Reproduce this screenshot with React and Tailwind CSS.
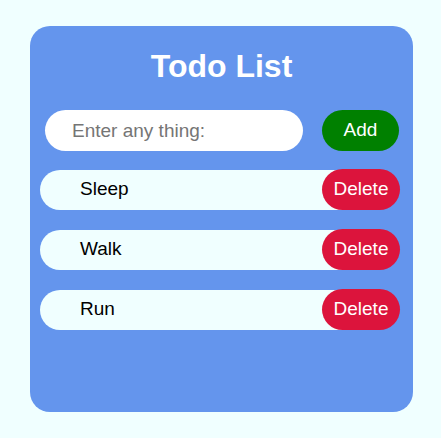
export default function App() {
  const items = ["Sleep", "Walk", "Run"];
  return (
    <div className="w-[441px] h-[438px] bg-[#f0ffff] pt-[26px] pl-[30px]" style={{ fontFamily: '"Liberation Sans", Arial, sans-serif' }}>
      <div className="w-[383px] h-[386px] bg-[#6495ed] rounded-[20px] flex flex-col">
        <h1 className="text-[32px] font-bold text-white text-center leading-[37px] mt-[22px]">Todo List</h1>
        <div className="flex items-center mt-[25px] pl-[15px]">
          <input
            className="w-[258px] h-[41px] rounded-full bg-white pl-[27px] text-[19px] text-black placeholder:text-[#757575] outline-none"
            placeholder="Enter any thing:"
          />
          <button className="ml-[19px] w-[77px] h-[41px] rounded-full bg-[#008000] text-white text-[19px]">Add</button>
        </div>
        <div className="flex flex-col gap-[19px] mt-[18px] pl-[10px]">
          {items.map((t) => (
            <div key={t} className="w-[360px] h-[41px] flex items-center">
              <div className="flex-1 h-[40px] bg-[#f0ffff] rounded-l-full flex items-center pl-[40px] text-[19px] text-black -mr-[30px] pr-[30px]">{t}</div>
              <button className="relative w-[78px] h-[41px] rounded-full bg-[#dc143c] text-white text-[19px]">Delete</button>
            </div>
          ))}
        </div>
      </div>
    </div>
  );
}
